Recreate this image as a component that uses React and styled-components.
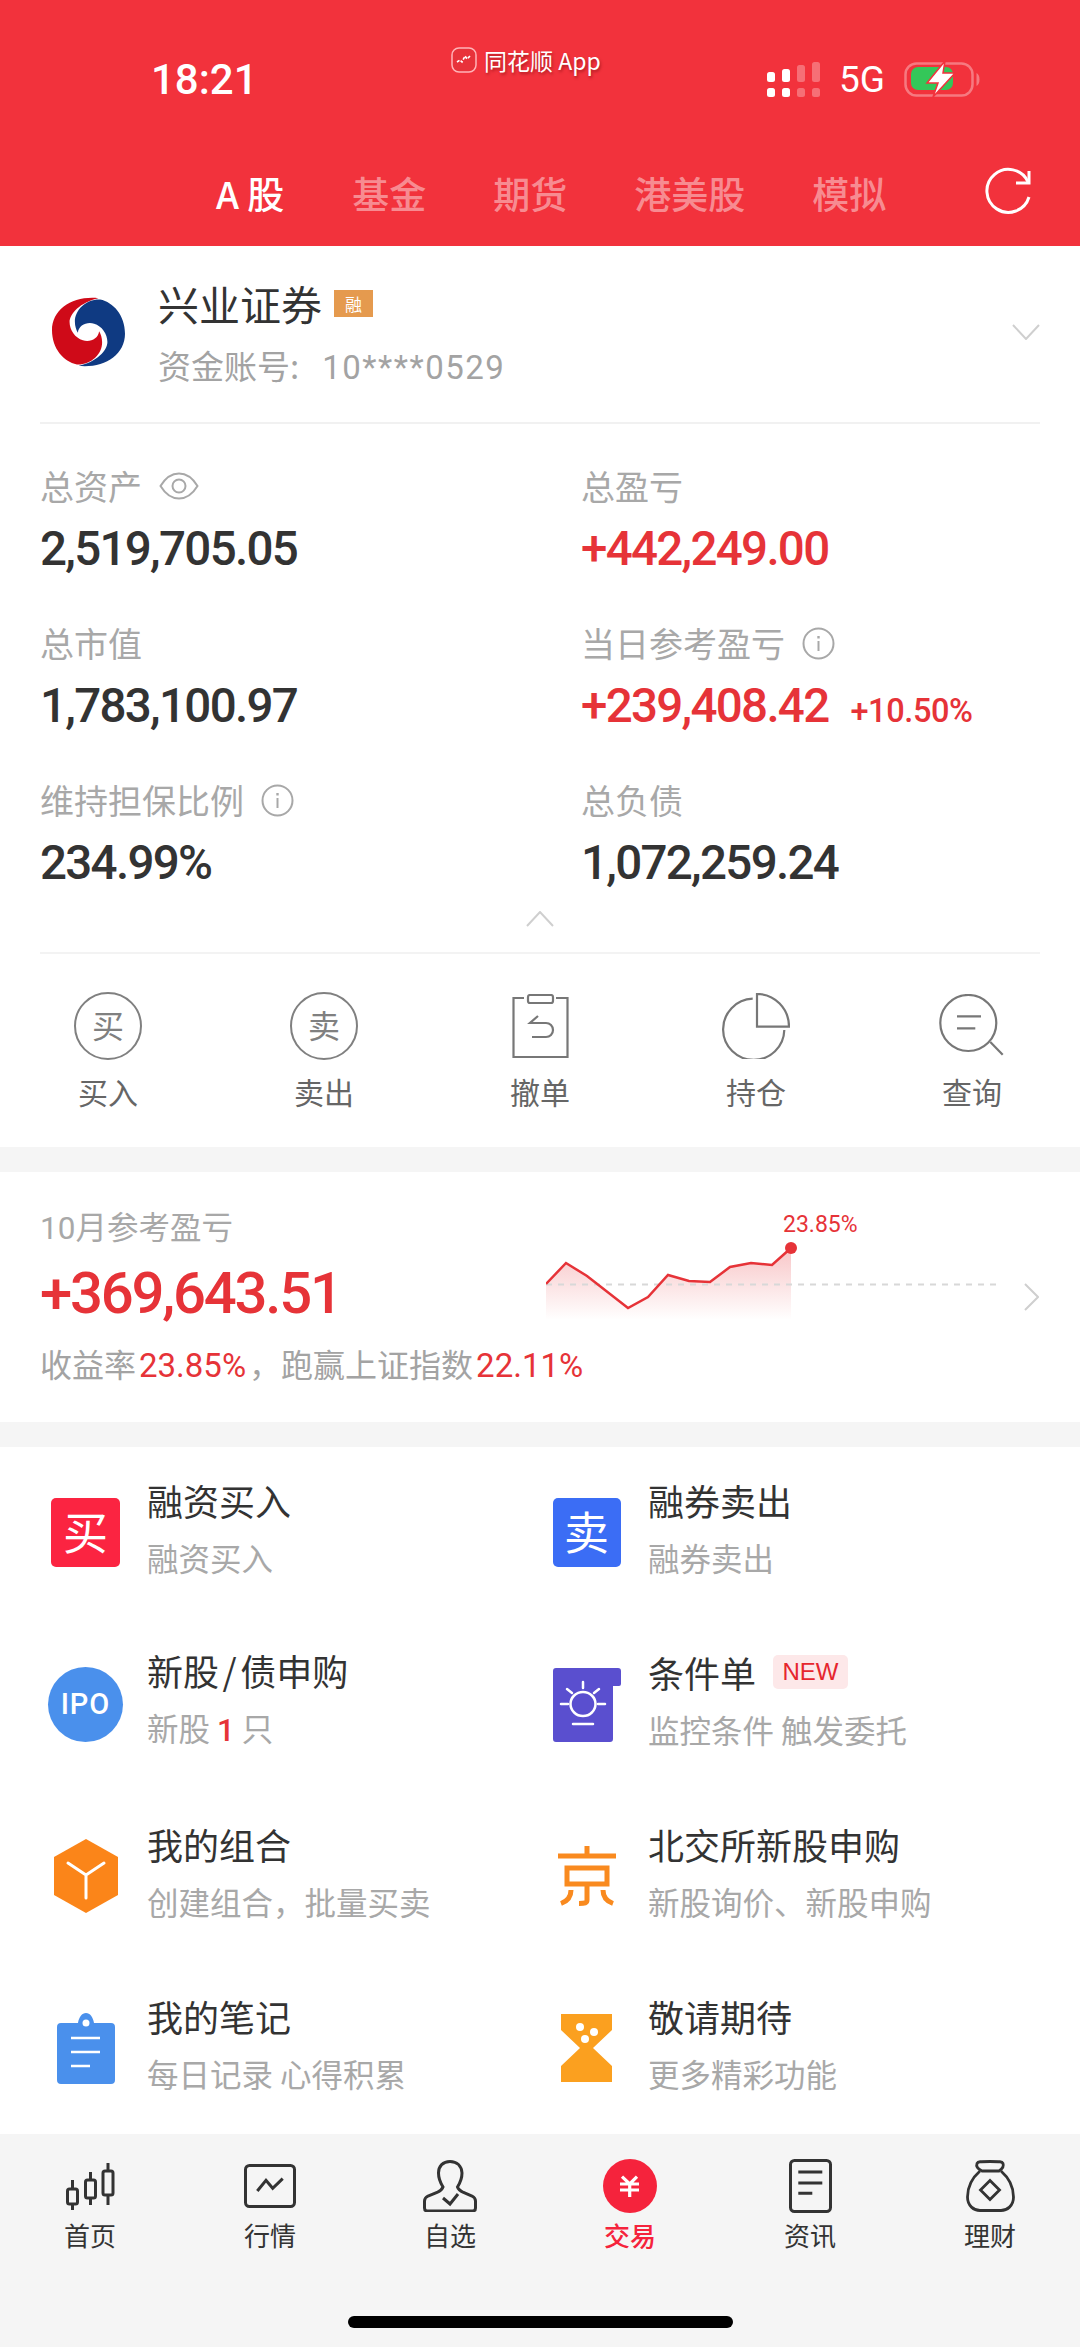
import React from "react";
import styled, { createGlobalStyle } from "styled-components";

const SANS = `Roboto, "Noto Sans CJK SC", sans-serif`;
const CJK = `"Noto Sans CJK SC", Roboto, sans-serif`;
const RED = "#e63338";

const GlobalStyle = createGlobalStyle`
  html, body { margin: 0; padding: 0; background: #fff; }
  * { box-sizing: border-box; }
  body { font-family: ${CJK}; }
`;

const Page = styled.div`
  width: 1080px;
  height: 2347px;
  display: flex;
  flex-direction: column;
  overflow: hidden;
  background: #f5f5f5;
`;

const Header = styled.header`
  height: 246px;
  flex: none;
  background: #f2323c;
  color: #fff;
`;

const StatusBar = styled.div`
  height: 168px;
  padding-left: 151px;
  display: flex;
  align-items: flex-start;
`;

const Time = styled.div`
  margin-top: 59px;
  width: 106px;
  font: 500 42px/42px ${SANS};
`;

const AppLabel = styled.div`
  margin: 46px 0 0 194px;
  width: 160px;
  display: flex;
  align-items: center;
  gap: 7px;
  font: 400 23px/28px ${CJK};
  text-shadow: 1px 2px 3px rgba(90, 0, 0, 0.45);
`;

const StatusRight = styled.div`
  margin: 61px 0 0 156px;
  display: flex;
  align-items: center;
`;

const NetLabel = styled.span`
  margin: 0 19px;
  font: 400 37px/36px ${SANS};
`;

const Tabs = styled.nav`
  height: 78px;
  display: flex;
  align-items: flex-start;
  padding: 0 49px 0 216px;
`;

const Tab = styled.span`
  font: 500 37px/50px ${CJK};
  margin-right: ${(p) => (p.$active ? 68 : 67)}px;
  color: ${(p) => (p.$active ? "#fff" : "rgba(255,255,255,0.45)")};
`;

const Refresh = styled.svg`
  margin-left: auto;
  margin-top: -1px;
`;

const Panel = styled.section`
  background: #fff;
  flex: none;
  height: ${(p) => p.$h}px;
`;

const Gap = styled.div`
  height: 25px;
  flex: none;
`;

const AccountRow = styled.div`
  margin: 0 40px;
  height: 178px;
  border-bottom: 2px solid #f1f1f1;
  display: flex;
  align-items: flex-start;
  padding: 49px 0 0 12px;
`;

const AccountText = styled.div`
  margin: -19px 0 0 33px;
`;

const AccountName = styled.div`
  display: flex;
  align-items: center;
  gap: 12px;
  font: 400 41px/54px ${CJK};
  color: #333;
`;

const Badge = styled.span`
  width: 39px;
  height: 27px;
  background: #e59a4e;
  color: #fff;
  font: 400 17px/27px ${CJK};
  text-align: center;
`;

const AccountNo = styled.div`
  margin-top: 15px;
  font: 400 33px/40px ${CJK};
  color: #a3a3a3;
  white-space: nowrap;
  span { font-family: ${SANS}; letter-spacing: 1.5px; margin-left: 23px; }
`;

const AccountArrow = styled.div`
  margin: 26px 0 0 auto;
`;

const StatsGrid = styled.div`
  margin: 0 0 0 40px;
  display: grid;
  grid-template-columns: 541px 1fr;
  grid-auto-rows: 157px;
  padding-top: 37px;
`;

const Stat = styled.div`
  display: flex;
  flex-direction: column;
`;

const StatLabel = styled.div`
  display: flex;
  align-items: center;
  gap: 17px;
  height: 50px;
  font: 400 34px/50px ${CJK};
  color: #a8a8a8;
`;

const StatValue = styled.div`
  margin-top: 13px;
  display: flex;
  align-items: baseline;
  gap: 22px;
  font: 500 47.5px/50px ${SANS};
  letter-spacing: -1.7px;
  color: ${(p) => (p.$up ? RED : "#333")};
  small { font: 500 32.5px/40px ${SANS}; letter-spacing: -0.4px; }
`;

const CollapseRow = styled.div`
  margin: -21px 40px 0;
  height: 43px;
  border-bottom: 2px solid #f3f3f3;
  display: flex;
  justify-content: center;
`;

const ActionRow = styled.div`
  padding: 37px 1px 0 0;
  display: grid;
  grid-template-columns: repeat(5, 216px);
`;

const Action = styled.div`
  display: flex;
  flex-direction: column;
  align-items: center;
  color: #666;
  font: 400 30px/40px ${CJK};
`;

const ActionIcon = styled.div`
  height: 70px;
  margin-bottom: 10px;
  display: flex;
  align-items: center;
`;

const ActionGlyph = styled.div`
  width: 68px;
  height: 68px;
  border-radius: 50%;
  border: 2px solid #808080;
  color: #808080;
  font: 400 32px/60px ${CJK};
  text-align: center;
`;

const MonthCard = styled.div`
  position: relative;
  padding: 33px 0 0 40px;
  display: grid;
  grid-template-columns: 506px 1fr;
`;

const MonthLabel = styled.div`
  font: 400 31.5px/40px ${CJK};
  color: #a8a8a8;
  span { font-family: ${SANS}; }
`;

const MonthValue = styled.div`
  margin-top: 9px;
  font: 500 58px/70px ${SANS};
  letter-spacing: -2.2px;
  color: ${RED};
`;

const MonthSub = styled.div`
  margin-top: 15px;
  font: 400 32px/40px ${CJK};
  color: #a3a3a3;
  white-space: nowrap;
  b { font: 400 33px/40px ${SANS}; color: ${RED}; padding: 0 3px; }
`;

const Spark = styled.svg`
  display: block;
`;

const SparkWrap = styled.div`
  position: relative;
  height: 100px;
  margin-top: 35px;
`;

const SparkTag = styled.span`
  position: absolute;
  left: 237px;
  top: -28px;
  font: 400 23px/26px ${SANS};
  color: ${RED};
`;

const SparkArrow = styled.svg`
  position: absolute;
  left: 1024px;
  top: 111px;
`;

const EntryGrid = styled.div`
  height: 687px;
  padding-left: 48px;
  display: grid;
  grid-template-columns: 501px 1fr;
  grid-template-rows: repeat(4, 171.75px);
`;

const Entry = styled.div`
  display: flex;
  align-items: center;
  gap: 24px;
`;

const EntryIcon = styled.div`
  width: 75px;
  height: 75px;
  flex: none;
  display: flex;
  align-items: center;
  justify-content: center;
`;

const EntryBody = styled.div`
  padding-bottom: 12px;
`;

const Square = styled.div`
  width: ${(p) => p.$w}px;
  height: 69px;
  border-radius: 5px;
  background: ${(p) => p.$bg};
  color: #fff;
  font: 400 45px/66px ${CJK};
  text-align: center;
`;

const IpoCircle = styled.div`
  width: 75px;
  height: 75px;
  border-radius: 50%;
  background: #4a90ec;
  color: #fff;
  font: 500 29px/75px ${SANS};
  letter-spacing: 1px;
  text-align: center;
`;

const EntryTitle = styled.div`
  display: flex;
  align-items: center;
  font: 400 36px/48px ${CJK};
  word-spacing: -4.5px;
  white-space: pre;
  color: #333;
  height: 48px;
`;

const NewTag = styled.span`
  margin-left: 17px;
  width: 75px;
  height: 34px;
  border-radius: 5px;
  background: #fde8e9;
  color: #e6262e;
  font: 400 24px/34px "Liberation Sans", sans-serif;
  text-align: center;
`;

const EntrySub = styled.div`
  margin-top: 13px;
  font: 400 31.5px/40px ${CJK};
  color: #a8a8a8;
  white-space: pre;
  b { font: 500 31px/40px ${SANS}; color: ${RED}; padding: 0 7px; }
`;

const TabBar = styled.footer`
  flex: 1;
  background: #f5f5f5;
  display: flex;
  flex-direction: column;
  align-items: center;
`;

const TabItems = styled.div`
  width: 100%;
  padding-top: 24px;
  display: grid;
  grid-template-columns: repeat(6, 180px);
`;

const TabItem = styled.div`
  display: flex;
  flex-direction: column;
  align-items: center;
  font: ${(p) => (p.$active ? 500 : 400)} 26px/36px ${CJK};
  color: ${(p) => (p.$active ? "#f5233c" : "#333")};
`;

const TabIconBox = styled.div`
  height: 56px;
  margin-bottom: 3px;
  display: flex;
  align-items: center;
  justify-content: center;
`;

const HomeBar = styled.div`
  margin-top: 63px;
  width: 385px;
  height: 12px;
  border-radius: 6px;
  background: #000;
`;

const Info = () => (
  <svg width="33" height="33" viewBox="0 0 33 33" fill="none" stroke="#a8a8a8">
    <circle cx="16.5" cy="16.5" r="15" strokeWidth="2" />
    <path d="M16.5 14v10" strokeWidth="2" />
    <path d="M16.5 9v2.5" strokeWidth="2.4" />
  </svg>
);

const Eye = () => (
  <svg width="40" height="28" viewBox="0 0 40 28" fill="none" stroke="#a8a8a8" strokeWidth="2">
    <path d="M1.5 14C7 5 13 1.5 20 1.5S33 5 38.5 14C33 23 27 26.5 20 26.5S7 23 1.5 14Z" />
    <circle cx="20" cy="14" r="6.5" />
  </svg>
);

const Logo = () => (
  <svg width="73" height="74" viewBox="35 30 220 220">
    <path
      fill="#cf0a18"
      d="M175 38C100 30 35 70 35 135C35 190 70 230 110 238C150 240 187 208 186 170C186 158 182 146 177 138C175 160 150 172 128 165C105 158 88 135 88 110C88 85 120 50 175 38Z"
    />
    <path
      fill="#0f3a82"
      d="M115 242C190 250 255 210 255 145C255 90 220 50 180 42C140 40 103 72 104 110C104 122 108 134 113 142C115 120 140 108 162 115C185 122 202 145 202 170C202 195 170 230 115 242Z"
    />
  </svg>
);

const CancelIcon = () => (
  <svg width="57" height="64" viewBox="0 0 57 64" fill="none" stroke="#777" strokeWidth="2.2">
    <path d="M12 4H1.5v59h54V4H44" />
    <rect x="16" y="1" width="25" height="8" rx="2" />
    <path d="M26 22l-8 7h16c4 0 7 3 7 7s-3 7-7 7H20" />
  </svg>
);

const PieIcon = () => (
  <svg width="68" height="66" viewBox="-2 0 68 66" fill="none" stroke="#777" strokeWidth="2.2">
    <path d="M28.7 5.7A30.6 30.6 0 1 0 60.3 37" />
    <path d="M33 1V33.7H65A32 32.7 0 0 0 33 1Z" />
  </svg>
);

const QueryIcon = () => (
  <svg width="66" height="64" viewBox="0 0 66 64" fill="none" stroke="#777" strokeWidth="2.2">
    <circle cx="29.3" cy="29" r="28" />
    <path d="M18 22.3h24M18 34.300h18.300" />
    <path d="M51.300 48l12.400 12.700" />
  </svg>
);

const Chevron = ({ dir }) => (
  <svg width="28" height="16" viewBox="0 0 28 16" fill="none" stroke="#cfcfcf" strokeWidth="2">
    <path d={dir === "up" ? "M1 15 14 1l13 14" : "M1 1l13 14L27 1"} />
  </svg>
);

const SparkChart = () => {
  const pts = [
    [0, 44], [20, 23], [41, 36], [82, 68], [102, 57], [122, 35], [143, 41],
    [164, 42], [184, 27], [205, 23], [226, 25], [245, 8],
  ];
  const line = pts.map((p) => p.join(",")).join(" ");
  return (
    <Spark width="510" height="100" viewBox="0 0 510 100">
      <defs>
        <linearGradient id="sparkFill" x1="0" y1="0" x2="0" y2="1">
          <stop offset="0" stopColor="#e63338" stopOpacity="0.28" />
          <stop offset="1" stopColor="#e63338" stopOpacity="0" />
        </linearGradient>
      </defs>
      <polygon points={`${line} 245,80 0,80`} fill="url(#sparkFill)" />
      <path d="M0 44.5H450" stroke="#d8d8d8" strokeWidth="2" strokeDasharray="6 6" />
      <polyline points={line} fill="none" stroke={RED} strokeWidth="2.5" />
      <circle cx="245" cy="8" r="6" fill={RED} />
    </Spark>
  );
};

const CubeIcon = () => (
  <svg width="66" height="74" viewBox="0 0 66 74">
    <path fill="#fb8519" d="M33 0 65 18v38L33 74 1 56V18Z" />
    <path d="M33 36v23M33 36 15 24M33 36l18-12" stroke="#fff" strokeWidth="3" fill="none" strokeLinecap="round" />
  </svg>
);

const LampIcon = () => (
  <svg width="68" height="74" viewBox="0 0 68 74">
    <path fill="#5a4fcf" d="M3 0h62a3 3 0 0 1 3 3v13a2 2 0 0 1-2 2h-6v53a3 3 0 0 1-3 3H3a3 3 0 0 1-3-3V3a3 3 0 0 1 3-3Z" />
    <g stroke="#fff" strokeWidth="2.5" fill="none" strokeLinecap="round">
      <ellipse cx="30" cy="36" rx="12.5" ry="12" />
      <path d="M30 14v6M14 21l5 4M46 21l-5 4M8 36h7M45 36h7M20 56h20" />
    </g>
  </svg>
);

const JingIcon = () => (
  <svg width="58" height="60" viewBox="0 0 58 60" fill="none" stroke="#f98a1f" strokeWidth="5">
    <path d="M0 10H58M29 0v8" />
    <path d="M9 22H49V38H9Z" />
    <path d="M29 38V54c0 3-2 3.500-8 3.500M13 44c0 6-3 11-10 13.500M45 44c0 6 3 11 10 13.500" />
  </svg>
);

const NoteIcon = () => (
  <svg width="58" height="71" viewBox="0 0 58 71">
    <path fill="#4a90ec" d="M4 10h17c1-6 4-10 8-10s7 4 8 10h17a4 4 0 0 1 4 4v53a4 4 0 0 1-4 4H4a4 4 0 0 1-4-4V14a4 4 0 0 1 4-4Z" />
    <circle cx="29" cy="10" r="3.5" fill="#fff" />
    <path d="M14 25h29M14 39h29M14 53h19" stroke="#fff" strokeWidth="2.5" />
  </svg>
);

const HourglassIcon = () => (
  <svg width="51" height="68" viewBox="0 0 51 68">
    <path fill="#fba01f" d="M0 0h51v16L32 34l19 18v16H0V52l19-18L0 16Z" />
    <circle cx="19" cy="13" r="4" fill="#fff" />
    <circle cx="33" cy="18" r="4" fill="#fff" />
    <circle cx="24" cy="25" r="4" fill="#fff" />
  </svg>
);

const HomeIcon = () => (
  <svg width="49" height="47" viewBox="0 0 49 47" fill="none" stroke="#333" strokeWidth="3">
    <rect x="1.5" y="26" width="10" height="15" rx="2" />
    <rect x="19.5" y="17" width="10" height="18" rx="2" />
    <rect x="37" y="8" width="10" height="24" rx="2" />
    <path d="M6.500 17v9M6.500 41v6M24.500 9v8M24.500 35v7M42 0v8M42 32v10" />
  </svg>
);

const MarketIcon = () => (
  <svg width="52" height="44" viewBox="0 0 52 44" fill="none" stroke="#333" strokeWidth="3">
    <rect x="1.5" y="1.5" width="49" height="41" rx="4" />
    <path d="M13.300 27 22 16.300l6.700 8 10-9.600" />
  </svg>
);

const WatchIcon = () => (
  <svg width="54" height="52" viewBox="0 0 54 52" fill="none" stroke="#333" strokeWidth="3">
    <path d="M27 1.500C20 1.500 15.500 6 15.500 13c0 6 2 10 4.500 14-1 3-3 4-6 5.500L5 36c-2 1-3.500 3-3.500 5v7c0 2 1 3 3 3h45c2 0 3-1 3-3v-7c0-2-1.500-4-3.500-5l-8.500-3.500c-3-1.500-5-2.500-6-5.500 2.500-4 4.500-8 4.500-14C38.500 6 34 1.500 27 1.500Z" />
    <path d="M20 38l7 6 8-10" />
  </svg>
);

const YuanIcon = () => (
  <svg width="54" height="54" viewBox="0 0 54 54">
    <circle cx="27" cy="27" r="27" fill="#f5233c" />
    <path d="M19 17.700 26.700 25 34 17.700M17 25h19M17 31h19M26.700 25v13" fill="none" stroke="#fff" strokeWidth="3.2" />
  </svg>
);

const NewsIcon = () => (
  <svg width="43" height="54" viewBox="0 0 43 54" fill="none" stroke="#333" strokeWidth="3">
    <rect x="1.5" y="1.5" width="40" height="51" rx="4" />
    <path d="M9.300 13h24M9.300 24h24M9.300 34.300h14" />
  </svg>
);

const MoneyIcon = () => (
  <svg width="49" height="52" viewBox="0 0 49 52" fill="none" stroke="#333" strokeWidth="2.8">
    <path d="M14 11C6 18 1.500 28 1.500 37 1.500 46 8 50.500 14 50.500H35c6 0 12.500-4.500 12.500-13.500C47.500 28 43 18 35 11" />
    <path d="M16 11C12 9 10 6 11 3.500 12 1.500 14 1.500 24 1.500s12 0 13 2c1 2.500-1 5.500-4 7.500Z" />
    <path d="M24 20.500 33.500 30 24 39.500 14.500 30Z" />
  </svg>
);

const stats = [
  { label: "总资产", extra: <Eye />, value: "2,519,705.05" },
  { label: "总盈亏", value: "+442,249.00", up: true },
  { label: "总市值", value: "1,783,100.97" },
  { label: "当日参考盈亏", extra: <Info />, value: "+239,408.42", up: true, small: "+10.50%" },
  { label: "维持担保比例", extra: <Info />, value: "234.99%" },
  { label: "总负债", value: "1,072,259.24" },
];

const actions = [
  { label: "买入", icon: <ActionGlyph>买</ActionGlyph> },
  { label: "卖出", icon: <ActionGlyph>卖</ActionGlyph> },
  { label: "撤单", icon: <CancelIcon /> },
  { label: "持仓", icon: <PieIcon /> },
  { label: "查询", icon: <QueryIcon /> },
];

const entries = [
  { title: "融资买入", sub: "融资买入", icon: <Square $w={69} $bg="#fb2441">买</Square> },
  { title: "融券卖出", sub: "融券卖出", icon: <Square $w={68} $bg="#3b6df5">卖</Square> },
  { title: "新股 / 债申购", sub: <>新股<b>1</b>只</>, icon: <IpoCircle>IPO</IpoCircle> },
  { title: "条件单", tag: "NEW", sub: "监控条件 触发委托", icon: <LampIcon /> },
  { title: "我的组合", sub: "创建组合，批量买卖", icon: <CubeIcon /> },
  { title: "北交所新股申购", sub: "新股询价、新股申购", icon: <JingIcon /> },
  { title: "我的笔记", sub: "每日记录 心得积累", icon: <NoteIcon /> },
  { title: "敬请期待", sub: "更多精彩功能", icon: <HourglassIcon /> },
];

const bottomTabs = [
  { label: "首页", icon: <HomeIcon /> },
  { label: "行情", icon: <MarketIcon /> },
  { label: "自选", icon: <WatchIcon /> },
  { label: "交易", icon: <YuanIcon />, active: true },
  { label: "资讯", icon: <NewsIcon /> },
  { label: "理财", icon: <MoneyIcon /> },
];

const App = () => {
  return (
    <Page>
      <GlobalStyle />
      <Header>
        <StatusBar>
          <Time>18:21</Time>
          <AppLabel>
            <svg width="26" height="26" viewBox="0 0 26 26">
              <rect x="1" y="1" width="24" height="24" rx="7" fill="#e8323a" stroke="#ffb4b8" strokeWidth="1.5" />
              <path d="M6 15l3-2 2 2 3-6 2 3 4-4" fill="none" stroke="#fff" strokeWidth="1.6" strokeDasharray="3 1.5" />
            </svg>
            同花顺 App
          </AppLabel>
          <StatusRight>
            <svg width="53" height="35" viewBox="0 0 53 35" fill="#fff">
              <rect x="0" y="10" width="8" height="10" rx="2.5" />
              <rect x="15" y="7" width="8" height="13" rx="2.5" />
              <rect x="30" y="3" width="8" height="17" rx="2.5" opacity="0.3" />
              <rect x="45" y="0" width="8" height="20" rx="2.5" opacity="0.3" />
              <rect x="0" y="26" width="8" height="9" rx="2.5" />
              <rect x="15" y="26" width="8" height="9" rx="2.5" />
              <rect x="30" y="26" width="8" height="9" rx="2.5" opacity="0.3" />
              <rect x="45" y="26" width="8" height="9" rx="2.5" opacity="0.3" />
            </svg>
            <NetLabel>5G</NetLabel>
            <svg width="76" height="37" viewBox="0 0 76 37">
              <rect x="1.5" y="2.5" width="67" height="32" rx="11" fill="none" stroke="#fff" strokeOpacity="0.35" strokeWidth="2.5" />
              <rect x="7" y="6" width="42" height="23" rx="7" fill="#34c759" />
              <path d="M72.5 12c2 1 3 3.5 3 6.5s-1 5.500-3 6.500Z" fill="#fff" fillOpacity="0.35" />
              <path d="M41 0 23 22h11l-5 14 22-24H39Z" fill="#fff" stroke="#f2323c" strokeWidth="1.5" />
            </svg>
          </StatusRight>
        </StatusBar>
        <Tabs>
          <Tab $active>A 股</Tab>
          <Tab>基金</Tab>
          <Tab>期货</Tab>
          <Tab>港美股</Tab>
          <Tab>模拟</Tab>
          <Refresh width="46" height="48" viewBox="0 0 46 48" fill="none" stroke="#fff" strokeWidth="3">
            <path d="M43 15A21.500 21.500 0 1 0 44 30" />
            <path d="M44 4v12H31" />
          </Refresh>
        </Tabs>
      </Header>

      <Panel $h={901}>
        <AccountRow>
          <Logo />
          <AccountText>
            <AccountName>
              兴业证券
              <Badge>融</Badge>
            </AccountName>
            <AccountNo>资金账号:<span>10****0529</span></AccountNo>
          </AccountText>
          <AccountArrow>
            <Chevron dir="down" />
          </AccountArrow>
        </AccountRow>
        <StatsGrid>
          {stats.map((s) => (
            <Stat key={s.label}>
              <StatLabel>
                {s.label}
                {s.extra}
              </StatLabel>
              <StatValue $up={s.up}>
                {s.value}
                {s.small && <small>{s.small}</small>}
              </StatValue>
            </Stat>
          ))}
        </StatsGrid>
        <CollapseRow>
          <Chevron dir="up" />
        </CollapseRow>
        <ActionRow>
          {actions.map((a) => (
            <Action key={a.label}>
              <ActionIcon>{a.icon}</ActionIcon>
              {a.label}
            </Action>
          ))}
        </ActionRow>
      </Panel>

      <Gap />

      <Panel $h={250}>
        <MonthCard>
          <div>
            <MonthLabel><span>10</span>月参考盈亏</MonthLabel>
            <MonthValue>+369,643.51</MonthValue>
            <MonthSub>收益率<b>23.85%</b>，跑赢上证指数<b>22.11%</b></MonthSub>
          </div>
          <SparkWrap>
            <SparkTag>23.85%</SparkTag>
            <SparkChart />
          </SparkWrap>
          <SparkArrow width="15" height="28" viewBox="0 0 15 28" fill="none" stroke="#cfcfcf" strokeWidth="2">
            <path d="M1 1l13 13L1 27" />
          </SparkArrow>
        </MonthCard>
      </Panel>

      <Gap />

      <Panel $h={687}>
        <EntryGrid>
          {entries.map((e) => (
            <Entry key={e.title}>
              <EntryIcon>{e.icon}</EntryIcon>
              <EntryBody>
                <EntryTitle>
                  {e.title}
                  {e.tag && <NewTag>{e.tag}</NewTag>}
                </EntryTitle>
                <EntrySub>{e.sub}</EntrySub>
              </EntryBody>
            </Entry>
          ))}
        </EntryGrid>
      </Panel>

      <TabBar>
        <TabItems>
          {bottomTabs.map((t) => (
            <TabItem key={t.label} $active={t.active}>
              <TabIconBox>{t.icon}</TabIconBox>
              {t.label}
            </TabItem>
          ))}
        </TabItems>
        <HomeBar />
      </TabBar>
    </Page>
  );
};

export default App;
